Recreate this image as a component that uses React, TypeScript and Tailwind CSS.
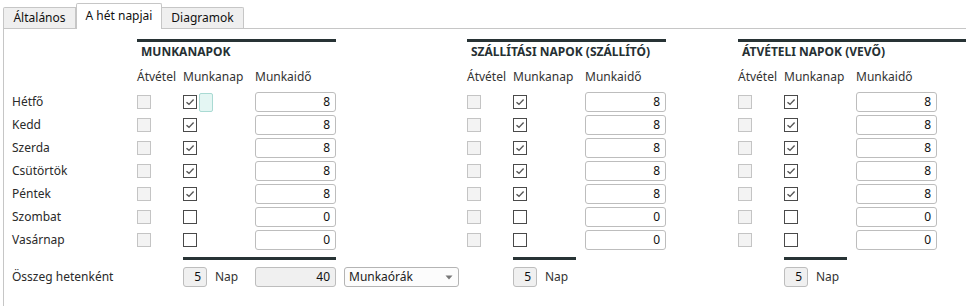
import React from "react";

const days = ["Hétfő", "Kedd", "Szerda", "Csütörtök", "Péntek", "Szombat", "Vasárnap"];
const hours = [8, 8, 8, 8, 8, 0, 0];

function Check({ checked }: { checked: boolean }) {
  return (
    <div className="w-[14px] h-[14px] border border-[#4a4a4a] bg-white flex items-center justify-center">
      {checked && (
        <svg width="10" height="8" viewBox="0 0 10 8">
          <path d="M1.5 4.2 L4 6.4 L8.6 1.6" fill="none" stroke="#555" strokeWidth="1.4" />
        </svg>
      )}
    </div>
  );
}

function DisabledCheck() {
  return <div className="w-[14px] h-[14px] border border-[#c4c4c4] bg-[#f3f3f3]" />;
}

function NumInput({ value, gray }: { value: number | string; gray?: boolean }) {
  return (
    <div
      className={`h-[20px] border border-[#bdbdbd] rounded-[3px] flex items-center justify-end pr-[5px] text-[#111] ${
        gray ? "bg-[#f0f0f0]" : "bg-white"
      } w-full`}
    >
      {value}
    </div>
  );
}

function Section({
  title,
  width,
  barWidth,
  first,
}: {
  title: string;
  width: string;
  barWidth: string;
  first?: boolean;
}) {
  return (
    <div className={`flex flex-col shrink-0 ${width}`}>
      <div className={`h-[3px] bg-[#283335] ${barWidth}`} />
      <div className="h-[20px] leading-[20px] pl-[4px] font-bold text-[#263033] whitespace-nowrap">{title}</div>
      <div className="h-[30px] flex items-center text-[#333]">
        <div className="w-[46px]">Átvétel</div>
        <div className="w-[72px]">Munkanap</div>
        <div>Munkaidő</div>
      </div>
      <div className="flex flex-col gap-[3px]">
        {days.map((d, i) => (
          <div key={d} className="h-[20px] flex items-center">
            <div className="w-[46px] flex items-center">
              <DisabledCheck />
            </div>
            <div className="w-[72px] flex items-center gap-[2px]">
              <Check checked={hours[i] > 0} />
              {first && i === 0 && (
                <div className="w-[14px] h-[19px] rounded-[2px] border border-[#a9dad3] bg-[#e4f6f3]" />
              )}
            </div>
            <div className="w-[81px]">
              <NumInput value={hours[i]} />
            </div>
          </div>
        ))}
      </div>
      <div className="mt-[7px] ml-[46px] flex">
        <div className={`h-[3px] bg-[#283335] ${first ? "w-[153px]" : "w-[63px]"}`} />
      </div>
      <div className="mt-[7px] h-[20px] flex items-center ml-[46px]">
        <div className="w-[72px] flex items-center">
          <div className="w-[24px] h-[20px] border border-[#bdbdbd] rounded-[3px] bg-[#f0f0f0] flex items-center justify-end pr-[5px] text-[#111]">
            5
          </div>
          <div className="ml-[8px] text-[#333]">Nap</div>
        </div>
        {first && (
          <>
            <div className="w-[81px]">
              <NumInput value={40} gray />
            </div>
            <div className="ml-[8px] w-[115px] h-[20px] border border-[#b4b4b4] rounded-[3px] bg-[#fcfcfc] flex items-center justify-between pl-[4px] pr-[5px] text-[#222]">
              <span>Munkaórák</span>
              <svg width="8" height="5" viewBox="0 0 8 5">
                <path d="M0.5 0.5 L7.5 0.5 L4 4.5 Z" fill="#777" />
              </svg>
            </div>
          </>
        )}
      </div>
    </div>
  );
}

export default function App() {
  return (
    <div
      className="w-[966px] h-[306px] bg-white overflow-hidden text-[12px] text-[#333]"
      style={{ fontFamily: '"Noto Sans", "Open Sans", sans-serif' }}
    >
      <div className="h-[28px] flex items-end pl-[3px]">
        <div className="w-[73px] h-[21px] border border-b-0 border-[#c6c6c6] bg-[#efefef] rounded-tl-[2px] flex items-center justify-center text-[#111]">
          Általános
        </div>
        <div className="relative z-10 w-[86px] h-[26px] -mb-px border border-b-0 border-[#c6c6c6] bg-white rounded-t-[2px] flex items-center justify-center pb-[2px] text-[#111]">
          A hét napjai
        </div>
        <div className="w-[82px] h-[21px] border border-l-0 border-b-0 border-[#c6c6c6] bg-[#efefef] rounded-tr-[2px] flex items-center justify-center text-[#111]">
          Diagramok
        </div>
      </div>
      <div className="ml-[3px] h-[278px] border-l border-t border-[#c6c6c6] pt-[10px] flex">
        <div className="w-[133px] shrink-0 pl-[8px] flex flex-col">
          <div className="h-[53px]" />
          <div className="flex flex-col gap-[3px]">
            {days.map((d) => (
              <div key={d} className="h-[20px] flex items-center text-[#2a2a2a]">
                {d}
              </div>
            ))}
          </div>
          <div className="h-[17px]" />
          <div className="h-[20px] flex items-center text-[#2a2a2a]">Összeg hetenként</div>
        </div>
        <Section title="MUNKANAPOK" width="w-[330px]" barWidth="w-[199px]" first />
        <Section title="SZÁLLÍTÁSI NAPOK (SZÁLLÍTÓ)" width="w-[271px]" barWidth="w-[199px]" />
        <Section title="ÁTVÉTELI NAPOK (VEVŐ)" width="w-[240px]" barWidth="w-[240px]" />
      </div>
    </div>
  );
}
